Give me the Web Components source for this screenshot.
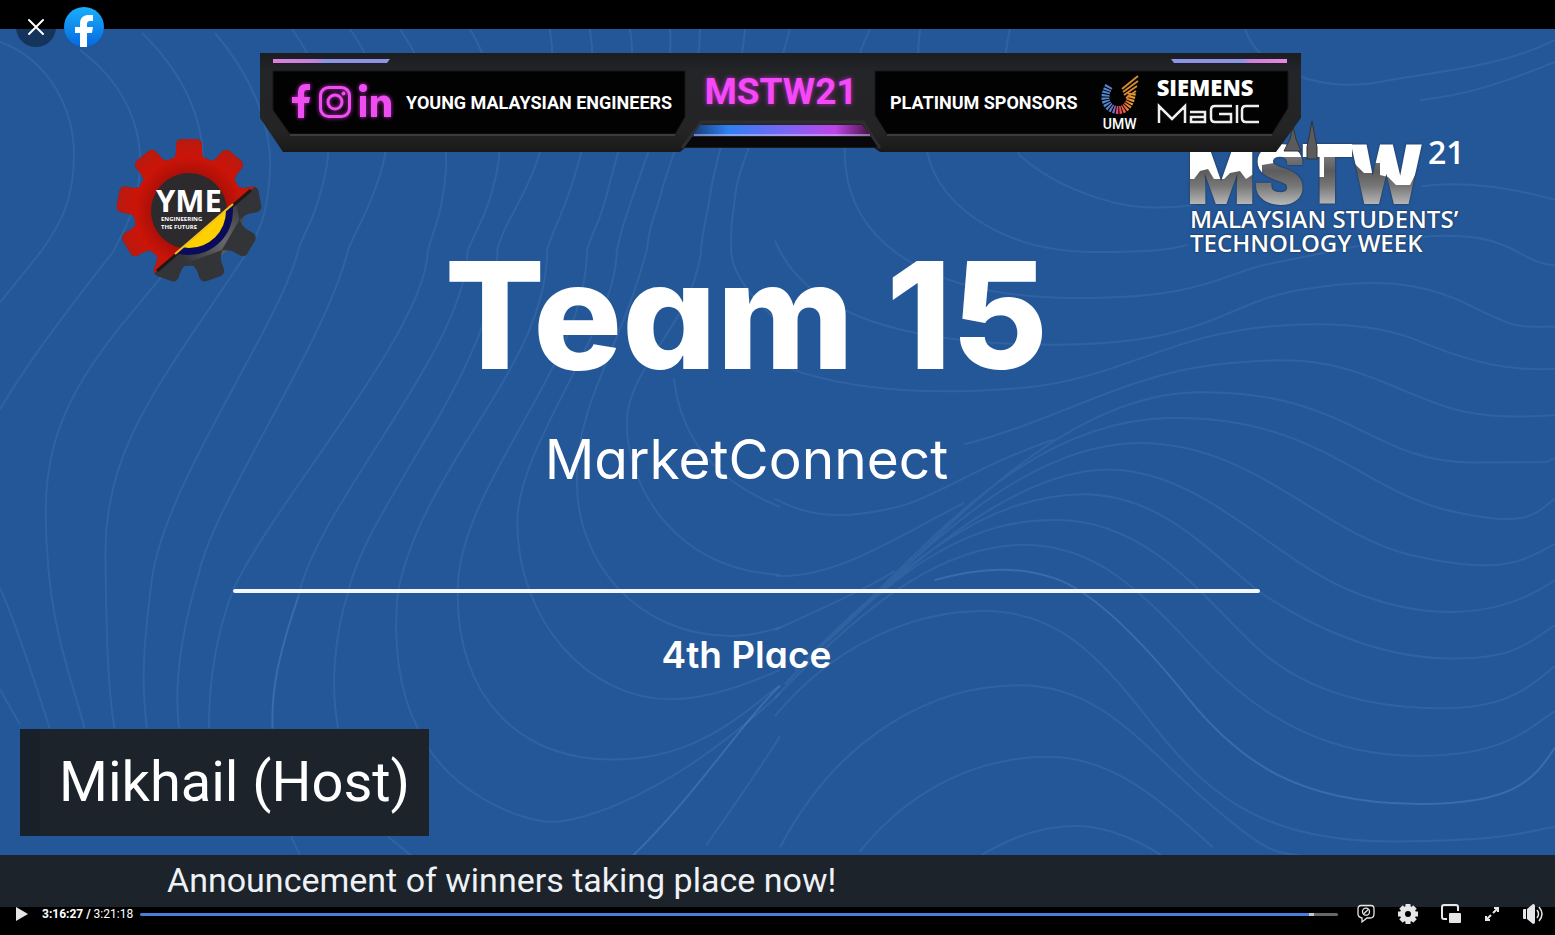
<!DOCTYPE html>
<html lang="en">
<head>
<meta charset="utf-8">
<title>MSTW21 Live</title>
<style>
html, body { margin: 0; height: 100%; background: #000; }
body { font-family: "Open Sans", "Liberation Sans", sans-serif; color: #fff; }
</style>
</head>
<body>
<video-player>
  <wave-backdrop slot="backdrop"></wave-backdrop>
  <sponsor-banner slot="banner"></sponsor-banner>
  <yme-logo slot="start-logo"></yme-logo>
  <event-logo slot="end-logo"></event-logo>
  <award-slide slot="slide">
    <span slot="team">Team 15</span>
    <span slot="project">MarketConnect</span>
    <span slot="place">4th Place</span>
  </award-slide>
  <name-tag slot="speaker">Mikhail (Host)</name-tag>
  <caption-bar slot="caption">Announcement of winners taking place now!</caption-bar>
  <top-actions slot="actions"></top-actions>
  <player-controls slot="controls"></player-controls>
</video-player>

<script>
function define(name, html) {
  const template = document.createElement('template');
  template.innerHTML = html;
  customElements.define(name, class extends HTMLElement {
    constructor() {
      super();
      this.attachShadow({ mode: 'open' }).append(template.content.cloneNode(true));
    }
  });
}

define('video-player', `
<style>
  :host { display: flex; flex-direction: column; min-height: 100vh; box-sizing: border-box; padding: 29px 0 28px; position: relative; background: #000; }
  .stage { flex: 1; display: grid; grid-template-rows: 1fr auto auto; position: relative; background: #245798; overflow: hidden; }
  .main { display: grid; position: relative; }
  .logos, .slide { grid-area: 1 / 1; position: relative; }
  .logos { display: flex; justify-content: space-between; align-items: flex-start; padding: 90px 85px 0 115px; }
  .speaker { padding: 0 20px 19px; position: relative; display: flex; }
  .caption { position: relative; }
</style>
<main class="stage">
  <slot name="backdrop"></slot>
  <div class="main">
    <div class="logos"><slot name="start-logo"></slot><slot name="end-logo"></slot></div>
    <div class="slide"><slot name="slide"></slot></div>
  </div>
  <div class="speaker"><slot name="speaker"></slot></div>
  <div class="caption"><slot name="caption"></slot></div>
  <slot name="banner"></slot>
</main>
<slot name="actions"></slot>
<slot name="controls"></slot>`);

define('wave-backdrop', `
<style>
  :host { position: absolute; inset: 0; display: block; }
  svg { display: block; width: 100%; height: 100%; }
  path { fill: none; stroke: #5b8cc8; stroke-opacity: .22; stroke-width: 2; vector-effect: non-scaling-stroke; }
  path.hi { stroke-opacity: .4; }
</style>
<svg viewBox="0 29 1555 878" preserveAspectRatio="none" aria-hidden="true">
  <path d="M0 42C50 60 74 110 74 155S60 225 42 250M80 50C120 80 140 120 140 160S130 220 114 250M142 33C185 75 203 120 203 160S195 225 184 250M215 33C255 80 272 130 270 170S262 225 249 250M292 29C325 75 335 130 325 175S305 230 298 250M350 29C385 80 395 130 380 175S358 225 348 250M400 29C440 90 450 140 445 180S435 225 428 250M470 29C500 80 505 140 495 180S478 225 468 250M550 29C560 100 540 160 525 190S505 225 497 250M590 29C600 100 580 160 570 190S555 225 547 250M630 29C640 90 615 160 608 190S595 225 587 250M670 29C675 90 645 160 635 190S622 225 617 250M700 29C700 90 670 160 662 190S649 225 647 250M745 29C740 90 715 160 711 190S703 225 701 250M790 29C775 90 740 160 736 190S731 225 731 250M845 150C845 110 850 70 870 29M927 150C920 110 915 70 920 29M1019 154C1005 120 1000 70 1010 29M1245 29C1260 75 1330 92 1380 82S1500 68 1555 40M1420 100C1470 95 1510 80 1555 62"/>
  <g transform="translate(775 150) scale(.4974 .4528)">
    <path d="M140 0C140 220 330 325 600 327S900 270 1000 250S1250 185 1370 190S1500 250 1568 255M305 0C330 140 480 225 640 225S800 215 830 210M490 10C560 80 680 130 770 127S840 118 850 115M1300 80C1400 65 1500 90 1568 110M0 200C60 360 250 430 560 430S900 340 1050 310S1300 290 1400 345S1500 390 1568 390M0 470C150 540 350 540 500 525S760 440 880 410S1180 370 1290 420S1480 490 1568 483M380 650C560 600 700 500 880 475S1130 470 1240 520S1400 600 1568 585"/>
    <path d="M100 1090C300 900 550 540 850 535S1200 690 1400 690S1540 690 1568 680M100 1090C300 880 500 600 790 592S1180 750 1350 795S1530 800 1568 770M80 1110C300 880 500 650 730 647S1100 850 1280 895S1500 910 1568 870M60 1130C300 880 500 700 680 706S1000 900 1150 970S1450 1040 1568 950M40 1150C280 880 450 760 620 760S900 920 980 980S1200 1120 1350 1123S1520 1080 1568 1050M20 1180C260 900 400 815 570 817S850 970 950 1080S1180 1230 1330 1233S1520 1180 1568 1140M0 1210C200 980 350 872 500 872S740 980 860 1120S1120 1340 1300 1338S1520 1270 1568 1240"/>
    <path class="hi" d="M320 950C420 920 490 920 560 945S720 1060 830 1210S1060 1440 1280 1444S1530 1380 1568 1320"/>
    <path d="M0 1250C120 1090 280 1018 420 1018S640 1100 760 1270S1000 1530 1250 1527S1500 1505 1568 1495M10 1540C130 1290 320 1182 490 1182S740 1320 880 1450S1000 1540 1100 1568M170 1550C280 1400 420 1340 550 1340S780 1440 880 1540M400 1568C480 1510 550 1492 610 1493S740 1530 780 1560M0 940C120 950 250 850 380 780M0 770C80 820 160 810 240 790S400 700 560 640M0 1060C100 1010 200 960 240 930"/>
  </g>
  <g transform="translate(0 250) scale(.4974 .389)">
    <path d="M0 135L85 0M0 410C50 300 120 180 230 0M370 0C200 260 90 400 92 680S140 1080 170 1230M500 0C330 330 210 500 212 780S220 1150 230 1230M600 0C560 200 330 600 305 850S290 1150 295 1230M700 0C650 250 430 650 400 830C360 1000 350 1130 360 1230M860 0C860 200 550 650 470 870C430 1000 420 1130 420 1230M940 0C940 250 640 650 600 890M1000 0C1000 300 740 650 700 880C670 1000 665 1130 680 1230M1100 0C1100 300 850 550 800 880C790 1000 800 1130 840 1230M1180 0C1180 300 920 600 920 880S1050 1310 1230 1310S1500 1180 1568 1120M1240 0C1240 200 1040 500 1040 700C1040 950 1180 1155 1350 1155C1430 1155 1510 1110 1568 1080M1300 0C1250 250 1155 400 1160 600C1160 800 1280 992 1470 992C1510 992 1540 982 1568 970M1410 0C1390 200 1258 300 1260 450S1350 820 1568 835M1470 0C1470 60 1510 120 1568 190M1355 330C1370 500 1450 600 1568 660M840 1230C900 1400 1050 1470 1110 1470S1350 1400 1568 1140M1420 1530C1480 1420 1530 1330 1568 1250M0 870C30 950 70 1110 100 1230M0 1130L40 1220M585 1508L605 1560M780 1508L830 1560"/>
    <path class="hi" d="M600 890C560 1040 545 1130 548 1230M1270 1560C1400 1400 1500 1200 1568 1120"/>
  </g>
</svg>`);

define('sponsor-banner', `
<style>
  :host { position: absolute; top: 24px; left: 260px; right: 254px; height: 100px; display: block; }
  .frame { position: absolute; inset: 0; width: 100%; height: 100%; }
  .row { position: relative; display: grid; grid-template-columns: 425fr 190fr 426fr; height: 100%; }
  .cell { display: flex; align-items: center; box-sizing: border-box; min-width: 0; white-space: nowrap; }
  .org { padding-left: 32px; }
  .sponsors { padding-left: 15px; }
  .org svg { width: 100px; height: 34px; margin: 0 14px 4px 0; filter: drop-shadow(0 0 2px #c02fc0); overflow: visible; }
  .name { font: 700 18px/24px Roboto, sans-serif; }
  .event { justify-content: center; padding: 0 0 22px 2px; font: 700 37px/48px Roboto, sans-serif; color: #f548f8; text-shadow: 0 0 5px #b02cb8; }
  .umw { display: flex; flex-direction: column; align-items: center; margin-left: 22px; font: 500 14px/14px Roboto, sans-serif; }
  .umw svg { width: 40px; height: 42px; }
  .brands { display: flex; flex-direction: column; margin: 0 0 6px 17px; }
  .siemens { font: 800 22px/24px "Open Sans", sans-serif; }
  .magic { width: 102px; height: 24px; margin-top: 3px; }
</style>
<svg class="frame" viewBox="0 0 1041 100" preserveAspectRatio="none" aria-hidden="true">
  <defs>
    <linearGradient id="shell" x2="0" y2="1"><stop stop-color="#1c1d20"/><stop offset=".2" stop-color="#242528"/><stop offset=".8" stop-color="#242425"/><stop offset="1" stop-color="#1a1919"/></linearGradient>
    <linearGradient id="glow"><stop stop-color="#143a70"/><stop offset=".2" stop-color="#2f80f0"/><stop offset=".5" stop-color="#7568f5"/><stop offset=".8" stop-color="#c044e8"/><stop offset="1" stop-color="#44123f"/></linearGradient>
    <linearGradient id="lineA"><stop stop-color="#e07fe0"/><stop offset=".35" stop-color="#c583e0"/><stop offset=".45" stop-color="#8d93e6"/><stop offset="1" stop-color="#8d93e6"/></linearGradient>
    <linearGradient id="lineB"><stop stop-color="#8d93e6"/><stop offset=".6" stop-color="#8d93e6"/><stop offset=".7" stop-color="#d27fe0"/><stop offset="1" stop-color="#e887df"/></linearGradient>
  </defs>
  <path fill="url(#shell)" d="M0 0H1041V65L1016 99H620L614 95H425L420 99H23L0 65Z"/>
  <path fill="#08080c" d="M432 84H611L618 94H425Z"/>
  <path fill="none" stroke="#2e2e30" stroke-width="3" d="M422 95L441 69H603L620 95"/>
  <path fill="url(#glow)" d="M440 72H602L611 83H432Z"/>
  <path fill="#d4c8ff" opacity=".5" d="M434 81H610V83H434Z"/>
  <path fill="#020203" stroke="#161617" d="M13 18H425V64L415 81H30L13 57Z"/>
  <path fill="#020203" stroke="#161617" d="M615 18H1028V55L1012 81H627L615 62Z"/>
  <path stroke="#3c3c3d" stroke-width="2" d="M30 82H415M627 82H1012"/>
  <path fill="url(#lineA)" d="M13 6H130L127 10H13Z"/>
  <path fill="url(#lineB)" d="M911 6H1027V10H914Z"/>
</svg>
<div class="row">
  <div class="cell org">
    <svg viewBox="0 0 100 34" fill="#ee4df2" role="img" aria-label="Facebook, Instagram, LinkedIn">
      <path d="M6 34V19H0V13H6V9C6 3 9 0 14 0H18V6H15C13 6 12 7 12 9V13H18L17 19H12V34Z"/>
      <rect x="28.5" y="3.500" width="29" height="29" rx="8" fill="none" stroke="#ee4df2" stroke-width="3"/>
      <circle cx="43" cy="18" r="7" fill="none" stroke="#ee4df2" stroke-width="3"/><circle cx="51.500" cy="9.500" r="2"/>
      <circle cx="71" cy="4" r="4"/><path d="M68 12H74V33H68ZM79 12H85V15C90 9 99 11 99 20V33H92V21C92 15 85 15 85 21V33H79Z"/>
    </svg>
    <span class="name">YOUNG MALAYSIAN ENGINEERS</span>
  </div>
  <div class="cell event">MSTW21</div>
  <div class="cell sponsors">
    <span class="name">PLATINUM SPONSORS</span>
    <div class="umw">
      <svg viewBox="0 0 40 42" fill="none" aria-hidden="true">
        <defs><linearGradient id="u"><stop stop-color="#4f8bd0"/><stop offset=".3" stop-color="#6a6fc0"/><stop offset=".45" stop-color="#e0446a"/><stop offset=".75" stop-color="#ef6a38"/><stop offset="1" stop-color="#e8a030"/></linearGradient></defs>
        <path stroke="url(#u)" stroke-width="8" stroke-dasharray="2 1" d="M9 11C1 25 8 34 17 35S31 28 32 17"/>
        <path stroke="#d48a30" stroke-width="2" d="M22 14L38 1M23 17L38 6M24 20L37 11M26 23L36 16"/>
      </svg>
      <span>UMW</span>
    </div>
    <div class="brands">
      <span class="siemens">SIEMENS</span>
      <svg class="magic" viewBox="0 0 102 24" role="img" aria-label="MaGIC" fill="none" stroke="#eee" stroke-width="2.500">
        <path d="M2 21V4L15 17L28 4V21M33 10H48V20H34V15H48M75 4H58Q54 4 54 8V16Q54 20 58 20H74V12H62M80 3V21M102 4H89Q85 4 85 8V16Q85 20 89 20H102"/>
      </svg>
    </div>
  </div>
</div>`);

{
  const teeth = Array.from({ length: 9 }, (_, i) =>
    `<path d="M-18 -48Q-13 -54 -13 -60V-67Q-12 -72 -7 -72H7Q12 -72 13 -67V-60Q13 -54 18 -48Z" transform="rotate(${i * 40})"/>`).join('');
  define('yme-logo', `
<style>
  :host { display: block; margin-top: 18px; }
  svg { display: block; width: 148px; height: 148px; }
  text { font-family: "Open Sans", sans-serif; font-weight: 700; fill: #fff; }
</style>
<svg viewBox="-74 -74 148 148" role="img" aria-label="YME Engineering the Future">
  <defs>
    <radialGradient id="steel" gradientUnits="userSpaceOnUse" cx="36" cy="30" r="45"><stop stop-color="#66686c"/><stop offset="1" stop-color="#333438"/></radialGradient>
    <radialGradient id="red" gradientUnits="userSpaceOnUse" cx="0" cy="0" r="72"><stop offset=".5" stop-color="#a80f08"/><stop offset=".75" stop-color="#cc1408"/><stop offset="1" stop-color="#b81a10"/></radialGradient>
    <clipPath id="up"><path d="M-90 -90H90V-43L62 -21L-32 60L-60 84L-90 90Z"/></clipPath>
    <clipPath id="low"><path d="M44 -8L-14 43L0 80L80 60Z"/></clipPath>
  </defs>
  <g fill="url(#steel)"><circle r="55"/>${teeth}</g>
  <g fill="url(#red)" clip-path="url(#up)"><circle r="55"/>${teeth}</g>
  <path d="M62 -21L-32 60" stroke="#221717" stroke-width="3"/>
  <circle r="38" fill="#2c2a2c"/>
  <g clip-path="url(#low)"><circle r="44" fill="#0b0b5c"/><circle r="37" fill="#ffd000"/></g>
  <path d="M44 -7L-14 43" stroke="#f4c020" stroke-width="2"/>
  <text x="-33" y="1" font-size="31">YME</text>
  <text x="-28" y="10" font-size="6">ENGINEERING</text>
  <text x="-28" y="18" font-size="6">THE FUTURE</text>
</svg>`);
}

define('event-logo', `
<style>
  :host { display: block; }
  svg { display: block; width: 280px; height: 88px; overflow: visible; }
  .mark { font: 700 78px Roboto, sans-serif; filter: drop-shadow(0 0 1px #222c3a); }
  .year { font: 600 32px "Open Sans", sans-serif; fill: #fff; }
  p { margin: 0; font: 600 24px/24px "Open Sans", sans-serif; white-space: nowrap; text-shadow: 0 0 2px #123; }
</style>
<svg viewBox="0 0 280 88" role="img" aria-label="MSTW 21">
  <defs>
    <linearGradient id="metal" gradientUnits="userSpaceOnUse" x1="0" y1="28" x2="0" y2="88"><stop stop-color="#8a8a8c"/><stop offset=".4" stop-color="#5c5c5e"/><stop offset=".65" stop-color="#777"/><stop offset="1" stop-color="#c0c0c0"/></linearGradient>
    <pattern id="sky" patternUnits="userSpaceOnUse" width="280" height="100">
      <rect width="280" height="100" fill="url(#metal)"/>
      <path fill="#fff" d="M0 0H250V54H226L220 66L206 66L198 58L190 56V44H182V54H174L166 46L160 38H134V58H128V42H118V38H90L84 44L72 46V58L62 56L56 60L50 52L40 54L34 60L24 60L18 50L10 52L4 60L0 60Z"/>
    </pattern>
  </defs>
  <text class="mark" x="-3" y="83" fill="url(#sky)" stroke="url(#sky)" stroke-width="4">MSTW</text>
  <path fill="#5b5b5d" stroke="#333" d="M94 32L100 20L103 8L106 20L111 32ZM117 40V28L119 18L122 2L125 18L127 28V40Z"/>
  <text class="year" x="238" y="45">21</text>
</svg>
<p>MALAYSIAN STUDENTS’</p>
<p>TECHNOLOGY WEEK</p>`);

define('award-slide', `
<style>
  :host { display: flex; flex-direction: column; align-items: center; text-align: center; padding: 215px 19% 0 15%; font-family: Inter, "Liberation Sans", sans-serif; font-feature-settings: "cv11"; }
  h1, h2, p { margin: 0; }
  h1 { font-size: 148px; line-height: 144px; font-weight: 800; }
  h2 { margin-top: 41px; font-size: 55px; line-height: 60px; font-weight: 400; }
  hr { width: 100%; height: 4px; margin: 100px 0 42px; border: 0; border-radius: 2px; background: #f2f7fc; }
  p { font-size: 37px; line-height: 40px; font-weight: 600; }
</style>
<h1><slot name="team"></slot></h1>
<h2><slot name="project"></slot></h2>
<hr>
<p><slot name="place"></slot></p>`);

define('name-tag', `
<style>
  :host { display: block; padding: 20px 19px 21px; border-left: 20px solid #182029; background: #1c232a; font: 400 56px/66px Roboto, sans-serif; white-space: nowrap; }
</style>
<slot></slot>`);

define('caption-bar', `
<style>
  :host { display: block; padding: 5px 167px 7px; background: #1c232a; color: #eef1f6; font: 400 34px/40px Roboto, sans-serif; }
</style>
<slot></slot>`);

define('top-actions', `
<style>
  :host { position: absolute; top: 7px; left: 16px; display: flex; gap: 8px; }
  button, a { display: block; width: 40px; height: 40px; padding: 0; border: 0; border-radius: 50%; background: rgba(0, 0, 0, .4); }
  svg { display: block; width: 40px; height: 40px; }
</style>
<button type="button" aria-label="Close"><svg viewBox="0 0 40 40"><path d="M13 13L27 27M27 13L13 27" stroke="#fff" stroke-width="2" stroke-linecap="round"/></svg></button>
<a href="#" aria-label="Facebook"><svg viewBox="0 0 40 40"><defs><linearGradient id="fb" x2="0" y2="1"><stop stop-color="#1aaffc"/><stop offset="1" stop-color="#0568e0"/></linearGradient></defs><circle cx="20" cy="20" r="20" fill="url(#fb)"/><path fill="#fff" d="M16 40V26H11V20H16V17C16 10 20 8 25 8L29 8V14H26C24 14 23 15 23 17V20H29L28 26H23V40Z"/></svg></a>`);

define('player-controls', `
<style>
  :host { position: absolute; left: 0; right: 0; bottom: 0; height: 42px; display: flex; align-items: center; padding: 0 12px 0 16px; font: 400 12px/16px Roboto, sans-serif; }
  button { display: block; padding: 0; border: 0; background: none; color: #e6e6e8; }
  svg { display: block; width: 20px; height: 20px; }
  .play svg { width: 12px; height: 14px; }
  .time { width: 88px; margin: 0 10px 0 14px; white-space: nowrap; }
  b { font-weight: 700; }
  input { flex: 1; min-width: 0; height: 3px; margin: 0 19px 0 0; appearance: none; border-radius: 2px; background: linear-gradient(90deg, #4a7ddc 97.6%, #c8c8c8 97.6% 98%, #68686a 98%); }
  input::-webkit-slider-thumb { appearance: none; width: 1px; height: 3px; background: transparent; }
  .tools { display: flex; align-items: center; gap: 23px; }
  .chat svg { width: 18px; } .full svg { width: 16px; height: 16px; }
</style>
<button class="play" type="button" aria-label="Play"><svg viewBox="0 0 12 14"><path fill="currentColor" d="M0 0L12 7L0 14Z"/></svg></button>
<div class="time"><b>3:16:27 /</b> 3:21:18</div>
<input type="range" min="0" max="12078" value="11787" aria-label="Seek">
<div class="tools">
  <button class="chat" type="button" aria-label="Hide comments"><svg viewBox="0 0 18 20" fill="none" stroke="currentColor" stroke-width="1.300"><path d="M4 1.500H14Q17 1.500 17 5V10Q17 14 13 14H10L5 18V14Q1 13 1 10V5Q1 1.500 4 1.500Z"/><circle cx="9" cy="7.700" r="3.500"/><path d="M6.500 10L11.500 5.300"/></svg></button>
  <button type="button" aria-label="Settings"><svg viewBox="-10 -10 20 20"><path fill="none" stroke="currentColor" stroke-width="5" d="M0 -5.500A5.500 5.500 0 1 1 0 5.500A5.500 5.500 0 1 1 0 -5.500"/><path stroke="currentColor" stroke-width="5" d="M0 -10V-6M0 10V6M-10 0H-6M10 0H6M-7 -7L-5 -5M7 7L5 5M7 -7L5 -5M-7 7L-5 5"/></svg></button>
  <button type="button" aria-label="Picture in picture"><svg viewBox="0 0 20 20"><path fill="none" stroke="currentColor" stroke-width="2" d="M6 15H3Q1 15 1 13V3Q1 1 3 1H15Q17 1 17 3V7"/><rect x="8" y="9" width="12" height="10" rx="1" fill="currentColor"/></svg></button>
  <button class="full" type="button" aria-label="Full screen"><svg viewBox="0 0 16 16" fill="none" stroke="currentColor" stroke-width="2"><path d="M9 7L14 2M10 2H14V6M7 9L2 14M2 10V14H6"/></svg></button>
  <button type="button" aria-label="Volume"><svg viewBox="0 0 20 20"><path fill="currentColor" d="M0 6Q0 5 1 5H3V15H1Q0 15 0 14ZM4 5L10 0Q12 0 12 2V18Q12 20 10 20L4 15Z"/><path fill="none" stroke="currentColor" stroke-width="1.500" d="M14 6Q17 10 14 14M16 3Q22 10 16 17"/></svg></button>
</div>`);
</script>
</body>
</html>
